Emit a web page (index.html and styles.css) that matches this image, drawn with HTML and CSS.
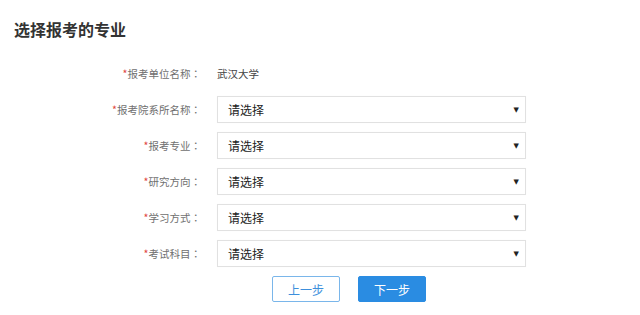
FILE: index.html
```html
<!DOCTYPE html>
<html lang="zh-CN">
<head>
<meta charset="utf-8">
<title>选择报考的专业</title>
<link rel="stylesheet" href="styles.css">
</head>
<body>
<div class="page">
  <h2 class="title">选择报考的专业</h2>
  <div class="form">
    <div class="row">
      <div class="label"><span class="req">*</span>报考单位名称<span class="colon" lang="ja">：</span></div>
      <div class="value">武汉大学</div>
    </div>
    <div class="row">
      <div class="label"><span class="req">*</span>报考院系所名称<span class="colon" lang="ja">：</span></div>
      <div class="select"><span>请选择</span><span class="arrow">▼</span></div>
    </div>
    <div class="row">
      <div class="label"><span class="req">*</span>报考专业<span class="colon" lang="ja">：</span></div>
      <div class="select"><span>请选择</span><span class="arrow">▼</span></div>
    </div>
    <div class="row">
      <div class="label"><span class="req">*</span>研究方向<span class="colon" lang="ja">：</span></div>
      <div class="select"><span>请选择</span><span class="arrow">▼</span></div>
    </div>
    <div class="row">
      <div class="label"><span class="req">*</span>学习方式<span class="colon" lang="ja">：</span></div>
      <div class="select"><span>请选择</span><span class="arrow">▼</span></div>
    </div>
    <div class="row">
      <div class="label"><span class="req">*</span>考试科目<span class="colon" lang="ja">：</span></div>
      <div class="select"><span>请选择</span><span class="arrow">▼</span></div>
    </div>
    <div class="actions">
      <button class="btn btn-prev">上一步</button>
      <button class="btn btn-next">下一步</button>
    </div>
  </div>
</div>
</body>
</html>
```

FILE: styles.css
```css
html, body {
  margin: 0;
  padding: 0;
  background: #fff;
}
body {
  font-family: "Noto Sans CJK SC", "Noto Sans", sans-serif;
  color: #333;
}
.page {
  width: 640px;
  height: 315px;
  overflow: hidden;
}
.title {
  margin: 0;
  padding: 18px 0 0 14px;
  height: 42px;
  box-sizing: border-box;
  font-size: 16px;
  line-height: 22px;
  font-weight: bold;
  color: #333;
}
.form {
  padding-top: 18px;
}
.row {
  display: flex;
  align-items: center;
  height: 27px;
  margin-bottom: 9px;
}
.label {
  width: 201px;
  text-align: right;
  font-size: 10.5px;
  color: #6f6f6f;
  flex-shrink: 0;
}
.colon {
  font-family: "Noto Sans CJK JP", sans-serif;
}
.req {
  color: #e0463c;
}
.value {
  margin-left: 16px;
  font-size: 10.5px;
  color: #444;
}
.select {
  margin-left: 16px;
  width: 309px;
  height: 27px;
  box-sizing: border-box;
  border: 1px solid #e1e1e1;
  box-shadow: 0 0 1px rgba(0,0,0,0.04);
  display: flex;
  align-items: center;
  justify-content: space-between;
  padding: 0 6px 0 10px;
  font-size: 12px;
  color: #222;
}
.arrow {
  font-size: 7px;
  color: #222;
  font-family: "DejaVu Sans", sans-serif;
}
.actions {
  display: flex;
  gap: 18px;
  padding-left: 272px;
  margin-top: 2px;
}
.btn {
  width: 68px;
  height: 26px;
  box-sizing: border-box;
  font-family: "Noto Sans CJK SC", sans-serif;
  font-size: 12px;
  border-radius: 2px;
  padding: 0;
  cursor: pointer;
}
.btn-prev {
  background: #fff;
  border: 1px solid #7ab6ea;
  color: #3d8fdc;
}
.btn-next {
  background: #2a8ce2;
  border: 1px solid #2a8ce2;
  color: #fff;
}
```
